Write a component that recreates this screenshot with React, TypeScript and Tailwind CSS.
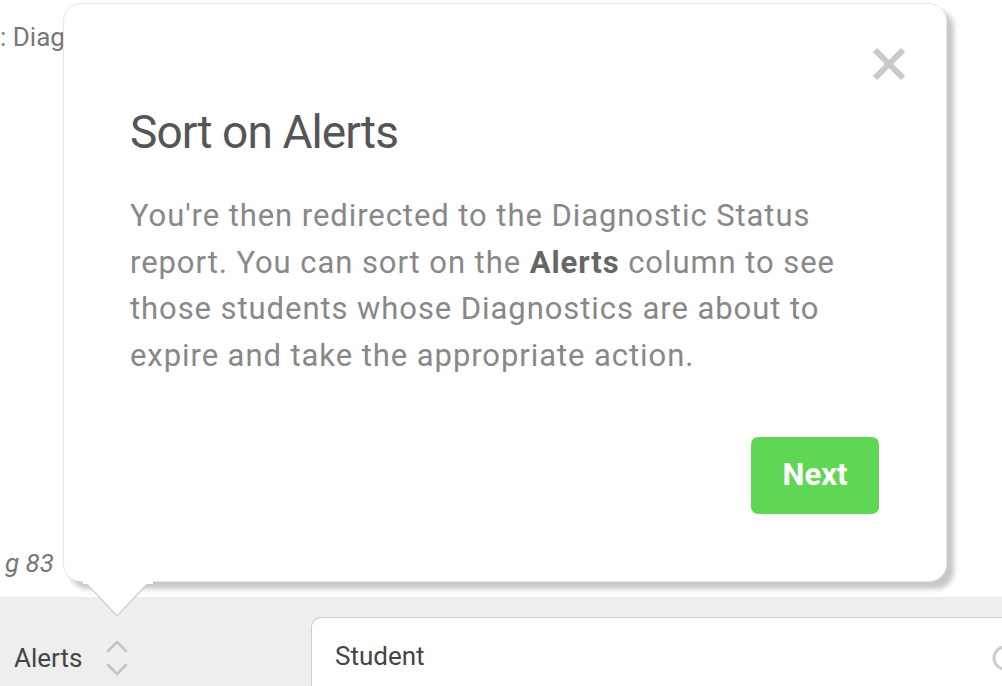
import React from 'react'

const SortChevrons: React.FC = () => (
  <svg width="24" height="40" viewBox="0 0 24 40" fill="none" stroke="#c4c4c4" strokeWidth="2.5" strokeLinecap="round" strokeLinejoin="round">
    <path d="M3 13 L12 4 L21 13" />
    <path d="M3 27 L12 36 L21 27" />
  </svg>
)

const CloseIcon: React.FC = () => (
  <svg width="34" height="34" viewBox="0 0 34 34" stroke="#c9c9c9" strokeWidth="6" strokeLinecap="butt">
    <path d="M3 3 L31 31" />
    <path d="M31 3 L3 31" />
  </svg>
)

const Popover: React.FC = () => (
  <div className="absolute left-[63px] top-[3px] w-[884px] h-[579px]">
    <div className="relative h-full rounded-[18px] border border-[#e6e6e6] bg-white shadow-[7px_7px_5px_rgba(0,0,0,0.22)] pl-[66px] pr-[90px] pt-[102px]">
      <button className="absolute right-[40px] top-[43px]">
        <CloseIcon />
      </button>
      <h2 className="text-[46px] leading-[52px] tracking-[-0.02em] text-[#555555]">Sort on Alerts</h2>
      <p className="mt-[35px] text-[31px] leading-[46.7px] tracking-[0.03em] text-[#888888]">
        You're then redirected to the Diagnostic Status report. You can sort on the{' '}
        <span className="font-bold text-[#666666]">Alerts</span> column to see those students whose Diagnostics are
        about to expire and take the appropriate action.
      </p>
      <div className="mt-[57px] flex justify-end mr-[-23px]">
        <button className="w-[128px] h-[77px] rounded-[7px] bg-[#5fd654] text-white text-[31px] font-bold">
          Next
        </button>
      </div>
    </div>
    {/* arrow */}
    <svg className="absolute left-[20px] top-[577px]" width="70" height="40" viewBox="0 0 70 40">
      <polygon points="0,0 34,36 68,0" fill="white" stroke="#d0d0d0" strokeWidth="1.5" />
      <rect x="0" y="0" width="70" height="4" fill="white" />
    </svg>
  </div>
)

export default function App() {
  return (
    <div className="relative w-[1002px] h-[686px] overflow-hidden bg-white font-['Roboto','Liberation_Sans',sans-serif]">
      <div className="flex h-[597px] flex-col justify-between pt-[17px] pb-[19px]">
        <div className="text-[26px] text-[#777777] leading-[40px]">: Diagnostic Status</div>
        <div className="pl-[5px] text-[26px] italic text-[#777777] leading-[30px]">g 83</div>
      </div>
      <div className="flex h-[89px] bg-[#eeeeee] pt-[20px]">
        <div className="flex w-[311px] items-start gap-[23px] pl-[14px] pt-[21px]">
          <span className="text-[26px] leading-[40px] text-[#444444]">Alerts</span>
          <SortChevrons />
        </div>
        <div className="flex flex-1 items-start justify-between rounded-tl-[10px] border-l border-t border-[#cccccc] bg-white pl-[23px] pt-[19px]">
          <span className="text-[26px] leading-[38px] text-[#444444]">Student</span>
          <svg width="20" height="30" viewBox="0 0 20 30" className="mr-[-6px] mt-[6px]">
            <circle cx="17" cy="15" r="11" fill="none" stroke="#cccccc" strokeWidth="3" />
          </svg>
        </div>
      </div>
      <Popover />
    </div>
  )
}
